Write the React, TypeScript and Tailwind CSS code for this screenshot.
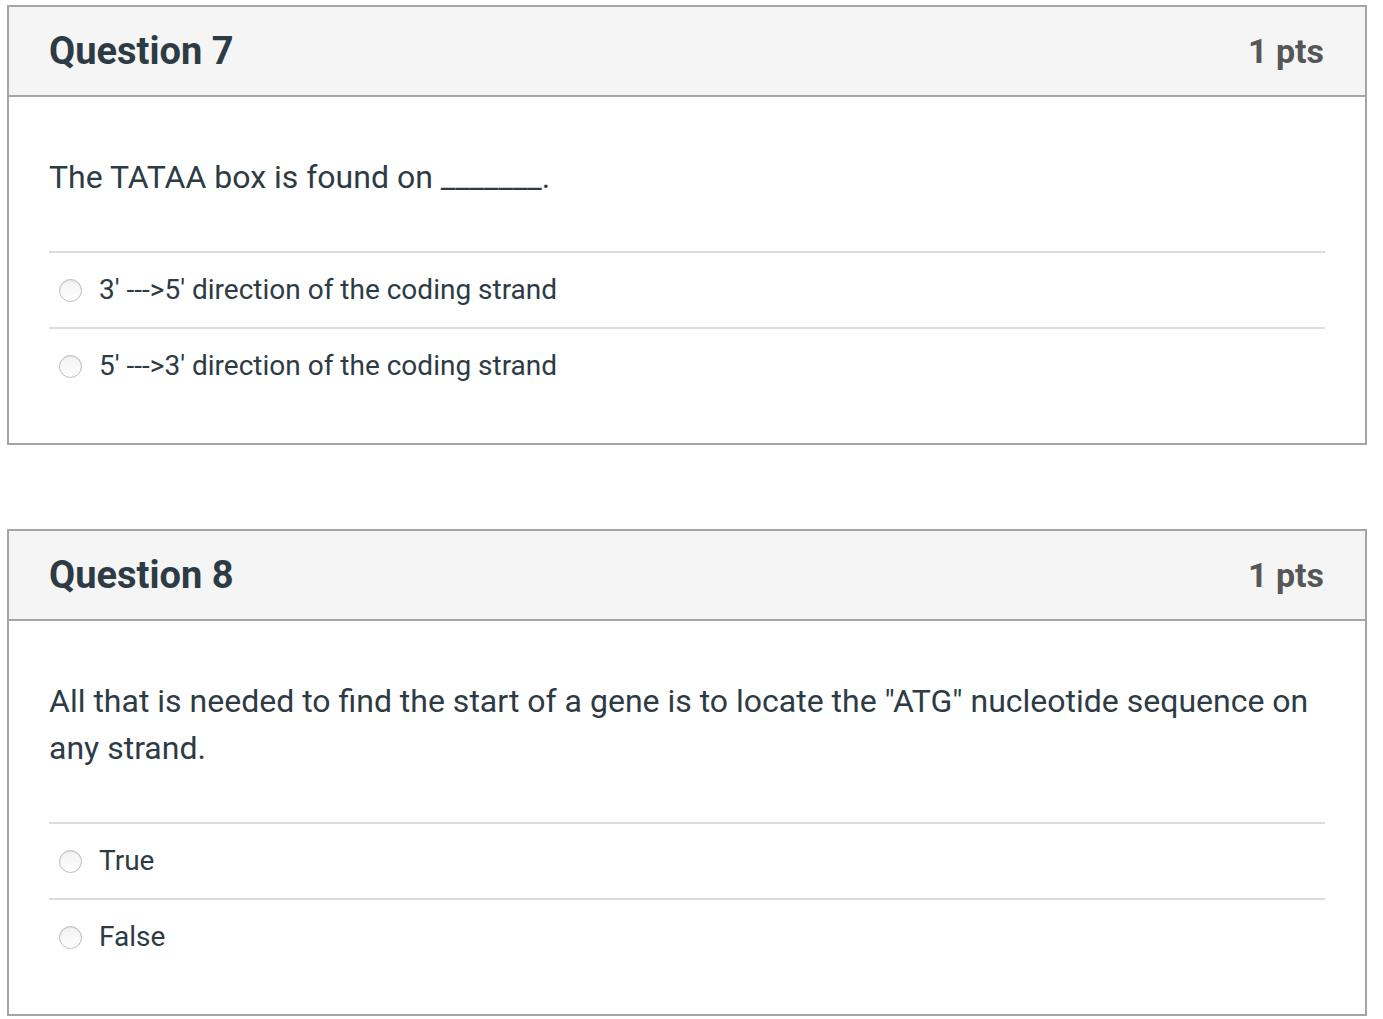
import React from "react"

interface Answer {
  id: string
  label: string
}

interface Question {
  id: number
  title: string
  points: string
  text: string
  answers: Answer[]
}

const questions: Question[] = [
  {
    id: 7,
    title: "Question 7",
    points: "1 pts",
    text: "The TATAA box is found on _______.",
    answers: [
      { id: "q7a", label: "3' --->5' direction of the coding strand" },
      { id: "q7b", label: "5' --->3' direction of the coding strand" },
    ],
  },
  {
    id: 8,
    title: "Question 8",
    points: "1 pts",
    text: 'All that is needed to find the start of a gene is to locate the "ATG" nucleotide sequence on any strand.',
    answers: [
      { id: "q8a", label: "True" },
      { id: "q8b", label: "False" },
    ],
  },
]

function Radio() {
  return (
    <span className="w-[23px] h-[23px] shrink-0 rounded-full border border-[#bdbdbd] bg-gradient-to-b from-[#f2f2f2] to-white shadow-[inset_0_1px_1px_rgba(0,0,0,0.08)]" />
  )
}

function QuestionCard({ q }: { q: Question }) {
  return (
    <div className="border-2 border-[#a5a5a5] bg-white">
      <div className="h-[90px] flex items-center justify-between bg-[#f5f5f5] border-b-2 border-[#a5a5a5] pl-[40px] pr-[41px]">
        <h2 className="text-[38px] font-bold text-[#2d3b45] leading-none">{q.title}</h2>
        <div className="text-[34px] font-bold text-[#565656] leading-none">{q.points}</div>
      </div>
      <div className="pl-[40px] pr-[40px] pt-[57px] pb-[40px]">
        <p className="text-[32px] leading-[47px] text-[#2d3b45] mb-[50px]">{q.text}</p>
        <div>
          {q.answers.map((a) => (
            <label
              key={a.id}
              className="flex items-center gap-[17px] h-[76px] border-t-2 border-[#dddddd] pl-[10px]"
            >
              <Radio />
              <span className="text-[28px] text-[#2d3b45]">{a.label}</span>
            </label>
          ))}
        </div>
      </div>
    </div>
  )
}

export default function App() {
  return (
    <div className="min-h-screen bg-white pt-[5px] pl-[7px] pr-[16px]" style={{ fontFamily: "Roboto, 'Liberation Sans', sans-serif" }}>
      <div className="w-[1360px] flex flex-col gap-[84px]">
        {questions.map((q) => (
          <QuestionCard key={q.id} q={q} />
        ))}
      </div>
    </div>
  )
}
